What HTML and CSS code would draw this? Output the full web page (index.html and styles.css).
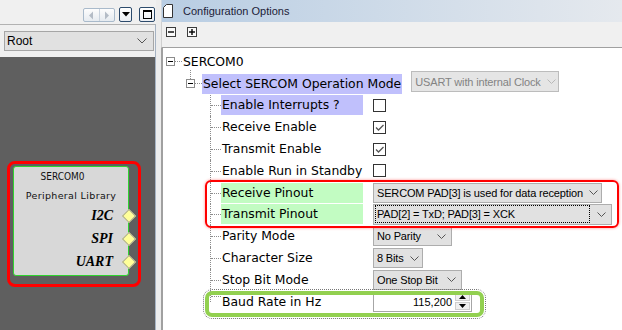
FILE: index.html
```html
<!DOCTYPE html>
<html>
<head>
<meta charset="utf-8">
<link rel="stylesheet" href="styles.css">
</head>
<body>
<div class="app">
  <div class="left">
    <div class="left-head">
      <div class="navpair">
        <span class="nav-btn"><svg width="6" height="9" viewBox="0 0 6 9"><path d="M5 0.5 L1 4.5 L5 8.5 Z" fill="#b4bcc6"/></svg></span>
        <span class="nav-btn"><svg width="6" height="9" viewBox="0 0 6 9"><path d="M1 0.5 L5 4.5 L1 8.5 Z" fill="#b4bcc6"/></svg></span>
      </div>
      <div class="win-btn drop"><svg width="8" height="5" viewBox="0 0 8 5"><path d="M0 0 H8 L4 4.5 Z" fill="#000"/></svg></div>
      <div class="win-btn max"><svg width="9" height="9" viewBox="0 0 9 9"><rect x="0.5" y="0.5" width="8" height="8" fill="none" stroke="#000"/><line x1="0" y1="1.5" x2="9" y2="1.5" stroke="#000"/></svg></div>
    </div>
    <div class="left-body">
      <div class="root-bar">
        <div class="combo root"><span>Root</span><svg class="chev" width="10" height="6" viewBox="0 0 10 6"><path d="M0.5 0.5 L5 5 L9.5 0.5" fill="none" stroke="#555"/></svg></div>
      </div>
      <div class="canvas">
        <div class="node-mark"></div>
        <div class="node">
          <div class="node-title">SERCOM0</div>
          <div class="node-sub">Peripheral Library</div>
          <div class="port">I2C</div>
          <div class="port">SPI</div>
          <div class="port">UART</div>
        </div>
      </div>
    </div>
  </div>
  <div class="splitter"></div>
  <div class="right">
    <div class="rp-head">
      <svg class="doc" width="10" height="14" viewBox="0 0 10 14"><path d="M0.5 3.5 L3.5 0.5 H9.5 V13.5 H0.5 Z" fill="#fff" stroke="#333"/></svg>
      <span class="rp-title">Configuration Options</span>
    </div>
    <div class="rp-tools">
      <span class="tbtn"><svg width="10" height="10" viewBox="0 0 10 10"><rect x="0.5" y="0.5" width="9" height="9" fill="#fafafa" stroke="#3c3c3c"/><line x1="2" y1="5" x2="8" y2="5" stroke="#000" stroke-width="1.4"/></svg></span>
      <span class="tbtn"><svg width="10" height="10" viewBox="0 0 10 10"><rect x="0.5" y="0.5" width="9" height="9" fill="#fafafa" stroke="#3c3c3c"/><line x1="2" y1="5" x2="8" y2="5" stroke="#000" stroke-width="1.4"/><line x1="5" y1="2" x2="5" y2="8" stroke="#000" stroke-width="1.4"/></svg></span>
    </div>
    <div class="tree">
      <div class="row l0"><span class="exp"></span><span class="hdots"></span><span class="label">SERCOM0</span></div>
      <div class="row l1"><span class="exp up"></span><span class="hdots"></span><span class="label hl-blue">Select SERCOM Operation Mode</span>
        <span class="combo disabled w-mode"><span>USART with internal Clock</span><svg class="chev" width="9" height="5" viewBox="0 0 9 5"><path d="M0.5 0.5 L4.5 4.5 L8.5 0.5" fill="none" stroke="#b8b8b8"/></svg></span></div>
      <div class="row l2"><span class="conn"></span><span class="label fixed hl-blue">Enable Interrupts ?</span><span class="check"></span></div>
      <div class="row l2"><span class="conn"></span><span class="label fixed">Receive Enable</span><span class="check"><svg width="11" height="11" viewBox="0 0 11 11"><path d="M2 5.5 L4.5 8 L9.5 3" fill="none" stroke="#555" stroke-width="1.3"/></svg></span></div>
      <div class="row l2"><span class="conn"></span><span class="label fixed">Transmit Enable</span><span class="check"><svg width="11" height="11" viewBox="0 0 11 11"><path d="M2 5.5 L4.5 8 L9.5 3" fill="none" stroke="#555" stroke-width="1.3"/></svg></span></div>
      <div class="row l2"><span class="conn"></span><span class="label fixed">Enable Run in Standby</span><span class="check"></span></div>
      <div class="row l2"><span class="conn"></span><span class="label fixed hl-green">Receive Pinout</span>
        <span class="combo w-rx"><span>SERCOM PAD[3] is used for data reception</span><svg class="chev" width="9" height="5" viewBox="0 0 9 5"><path d="M0.5 0.5 L4.5 4.5 L8.5 0.5" fill="none" stroke="#555"/></svg></span></div>
      <div class="row l2"><span class="conn"></span><span class="label fixed hl-green">Transmit Pinout</span>
        <span class="combo w-tx"><span class="focus">PAD[2] = TxD; PAD[3] = XCK</span><svg class="chev" width="9" height="5" viewBox="0 0 9 5"><path d="M0.5 0.5 L4.5 4.5 L8.5 0.5" fill="none" stroke="#555"/></svg></span></div>
      <div class="row l2"><span class="conn"></span><span class="label fixed">Parity Mode</span>
        <span class="combo w-par"><span>No Parity</span><svg class="chev" width="9" height="5" viewBox="0 0 9 5"><path d="M0.5 0.5 L4.5 4.5 L8.5 0.5" fill="none" stroke="#555"/></svg></span></div>
      <div class="row l2"><span class="conn"></span><span class="label fixed">Character Size</span>
        <span class="combo w-bits"><span>8 Bits</span><svg class="chev" width="9" height="5" viewBox="0 0 9 5"><path d="M0.5 0.5 L4.5 4.5 L8.5 0.5" fill="none" stroke="#555"/></svg></span></div>
      <div class="row l2"><span class="conn"></span><span class="label fixed">Stop Bit Mode</span>
        <span class="combo w-stop"><span>One Stop Bit</span><svg class="chev" width="9" height="5" viewBox="0 0 9 5"><path d="M0.5 0.5 L4.5 4.5 L8.5 0.5" fill="none" stroke="#555"/></svg></span></div>
      <div class="row l2 last"><span class="conn"></span><span class="label fixed">Baud Rate in Hz</span>
        <span class="spin"><span class="spin-val">115,200</span><span class="spin-btns"><span class="sb"><svg width="7" height="4" viewBox="0 0 7 4"><path d="M0 4 H7 L3.5 0 Z" fill="#000"/></svg></span><span class="sb"><svg width="7" height="4" viewBox="0 0 7 4"><path d="M0 0 H7 L3.5 4 Z" fill="#000"/></svg></span></span></span></div>
      <div class="mark-red"></div>
      <div class="mark-green"></div>
    </div>
  </div>
</div>
</body>
</html>
```
FILE: styles.css
```css
html, body {
  margin: 0;
  padding: 0;
}
body {
  width: 622px;
  height: 330px;
  overflow: hidden;
  font-family: "Liberation Sans", Arial, sans-serif;
  background: #fff;
}
.app {
  display: flex;
  width: 622px;
  height: 330px;
}

/* ---------- left panel ---------- */
.left {
  width: 156px;
  flex: none;
  display: flex;
  flex-direction: column;
  background: #f0f0f0;
}
.left-head {
  height: 24px;
  box-sizing: border-box;
  display: flex;
  justify-content: flex-end;
  align-items: flex-start;
  padding-top: 7px;
  padding-right: 1px;
}
.navpair {
  display: flex;
  width: 32px;
  height: 14px;
  margin-top: 1px;
  box-sizing: border-box;
  border: 1px solid #a9bacb;
  border-radius: 2px;
  background: linear-gradient(#fdfdfd, #e6ebf0);
}
.nav-btn {
  flex: 1;
  display: flex;
  align-items: center;
  justify-content: center;
}
.nav-btn + .nav-btn {
  border-left: 1px solid #c9d3de;
}
.win-btn {
  box-sizing: border-box;
  height: 15px;
  border: 1px solid #2d4b6c;
  border-radius: 2px;
  background: linear-gradient(#ffffff, #e9edf2);
  display: flex;
  align-items: center;
  justify-content: center;
}
.win-btn.drop {
  width: 13px;
  margin-left: 4px;
}
.win-btn.max {
  width: 16px;
  margin-left: 7px;
}
.left-body {
  flex: 1;
  display: flex;
  flex-direction: column;
  border-top: 1px solid #b2b2b2;
  border-right: 1px solid #a6b3c3;
}
.root-bar {
  height: 32px;
  box-sizing: border-box;
  padding: 6px 0 0 4px;
}
.combo {
  display: flex;
  align-items: center;
  justify-content: space-between;
  box-sizing: border-box;
  height: 20px;
  border: 1px solid #adadad;
  background: #e1e1e1;
  padding: 0 5px 0 3px;
  font-family: "Liberation Sans", Arial, sans-serif;
  font-size: 11px;
  letter-spacing: -0.15px;
  color: #000;
  white-space: nowrap;
}
.chev {
  flex: none;
  margin-left: 6px;
}
.combo.root {
  width: 150px;
  height: 20px;
  font-size: 12px;
  letter-spacing: 0;
  padding: 0 6px 0 2px;
  border-color: #a6a6a6;
}
.canvas {
  flex: 1;
  background: #5f5f5f;
  position: relative;
}
.node-mark {
  position: absolute;
  left: 7px;
  top: 104px;
  width: 134px;
  height: 126px;
  box-sizing: border-box;
  border: 3px solid #ff0000;
  border-radius: 8px;
}
.node {
  position: absolute;
  left: 13px;
  top: 109px;
  width: 116px;
  height: 110px;
  box-sizing: border-box;
  border: 1px solid #2fd42f;
  border-radius: 3px;
  background: #d8d8d8;
  display: flex;
  flex-direction: column;
}
.node-title {
  height: 20px;
  line-height: 20px;
  text-align: center;
  padding-right: 17px;
  font-family: "DejaVu Sans Condensed", "DejaVu Sans", sans-serif;
  font-stretch: condensed;
  font-size: 10px;
  color: #111;
}
.node-sub {
  height: 17px;
  line-height: 17px;
  text-align: center;
  font-family: "DejaVu Sans", sans-serif;
  font-size: 9.5px;
  letter-spacing: 0.35px;
  color: #111;
}
.port {
  position: relative;
  height: 23px;
  display: flex;
  align-items: center;
  justify-content: flex-end;
  padding-right: 15px;
  font-family: "Liberation Serif", "Times New Roman", serif;
  font-weight: bold;
  font-style: italic;
  font-size: 14px;
  color: #000;
}
.port::after {
  content: "";
  position: absolute;
  right: -6px;
  top: 50%;
  width: 8px;
  height: 8px;
  margin-top: -5px;
  background: #ffff99;
  border: 1px solid #a8a890;
  transform: rotate(45deg);
}

.splitter {
  width: 5px;
  flex: none;
  background: #ececec;
}

/* ---------- right panel ---------- */
.right {
  flex: 1;
  min-width: 0;
  display: flex;
  flex-direction: column;
}
.rp-head {
  height: 22px;
  flex: none;
  display: flex;
  align-items: center;
  box-sizing: border-box;
  padding-left: 1px;
  border-left: 1px solid #cfd7df;
  background: linear-gradient(to right, #b8cde3, #e5e9ee);
}
.doc {
  margin-right: 10px;
}
.rp-title {
  font-size: 11px;
  color: #1c1c38;
}
.rp-tools {
  height: 26px;
  flex: none;
  box-sizing: border-box;
  display: flex;
  align-items: flex-start;
  gap: 11px;
  padding: 5px 0 0 4px;
  background: #f0f0f0;
  border-bottom: 1px solid #a0a0a0;
  border-left: 1px solid #cfcfcf;
}
.tbtn {
  display: flex;
  width: 10px;
  height: 10px;
}
.tree {
  flex: 1;
  position: relative;
  background: #fff;
  border-left: 2px solid #a0a0a0;
  padding-top: 3px;
  font-family: "DejaVu Sans", Verdana, sans-serif;
  font-size: 12.4px;
  color: #000;
}
.row {
  height: 21.8px;
  display: flex;
  align-items: center;
  white-space: nowrap;
}
.l0 {
  padding-left: 3px;
}
.l1 {
  padding-left: 23px;
}
.l2 {
  padding-left: 47px;
}
.exp {
  position: relative;
  width: 9px;
  height: 9px;
  flex: none;
  box-sizing: border-box;
  border: 1px solid #8c8c8c;
  background: #fff;
}
.exp::after {
  content: "";
  position: absolute;
  left: 1px;
  right: 1px;
  top: 3px;
  height: 1px;
  background: #000;
}
.exp.up::before {
  content: "";
  position: absolute;
  left: 3px;
  top: -10px;
  height: 9px;
  border-left: 1px dotted #8c8c8c;
}
.hdots {
  width: 7px;
  flex: none;
  border-top: 1px dotted #8c8c8c;
}
.label {
  padding: 0 1px;
  line-height: 20px;
  height: 20px;
}
.label.fixed {
  width: 142px;
  box-sizing: border-box;
  flex: none;
  margin-right: 10px;
}
.hl-blue {
  background: #c0c0fc;
}
.hl-green {
  background: #c2fcc2;
}
.l1 .label {
  margin-right: 9px;
}
.conn {
  position: relative;
  width: 11px;
  height: 100%;
  flex: none;
  box-sizing: border-box;
  border-left: 1px dotted #8c8c8c;
}
.conn::after {
  content: "";
  position: absolute;
  left: 0;
  right: 0;
  top: 50%;
  border-top: 1px dotted #8c8c8c;
}
.last .conn {
  height: 50%;
  align-self: flex-start;
}
.check {
  width: 13px;
  height: 13px;
  box-sizing: border-box;
  border: 1px solid #333;
  background: #fff;
  display: flex;
  align-items: center;
  justify-content: center;
}
.combo.disabled {
  background: #e5e5e5;
  border-color: #bcbcbc;
  color: #838383;
  height: 21px;
  margin-top: -4px;
}
.w-mode { width: 148px; }
.w-rx { width: 229px; }
.w-tx { width: 239px; height: 21px; padding-left: 2px; padding-right: 5px; }
.w-par { width: 79px; }
.w-bits { width: 50px; }
.w-stop { width: 89px; }
.focus {
  flex: 1;
  margin-right: 2px;
  line-height: 16px;
  outline: 1px dotted #000;
  padding-left: 1px;
}
.spin {
  width: 99px;
  height: 21px;
  box-sizing: border-box;
  border: 1px solid #a6a6a6;
  background: #fff;
  display: flex;
  align-items: center;
  font-family: "Liberation Sans", Arial, sans-serif;
  font-size: 11px;
}
.spin-val {
  flex: 1;
  text-align: right;
  padding-right: 3px;
}
.spin-btns {
  width: 15px;
  height: 17px;
  margin-right: 1px;
  display: flex;
  flex-direction: column;
  gap: 1px;
}
.sb {
  flex: 1;
  display: flex;
  align-items: center;
  justify-content: center;
  background: #f0f0f0;
  border: 1px solid #cfcfcf;
  box-sizing: border-box;
}

/* annotations */
.mark-red {
  position: absolute;
  left: 42px;
  top: 132px;
  width: 414px;
  height: 48px;
  box-sizing: border-box;
  border: 2px solid #ff0000;
  border-radius: 6px;
  box-shadow: 0 0 3px rgba(255, 0, 0, 0.45);
}
.mark-green {
  position: absolute;
  left: 42px;
  top: 243px;
  width: 279px;
  height: 26px;
  box-sizing: border-box;
  border: 4px solid #92d050;
  border-radius: 7px;
  outline: 1px dotted #777;
  outline-offset: 1px;
}
```
